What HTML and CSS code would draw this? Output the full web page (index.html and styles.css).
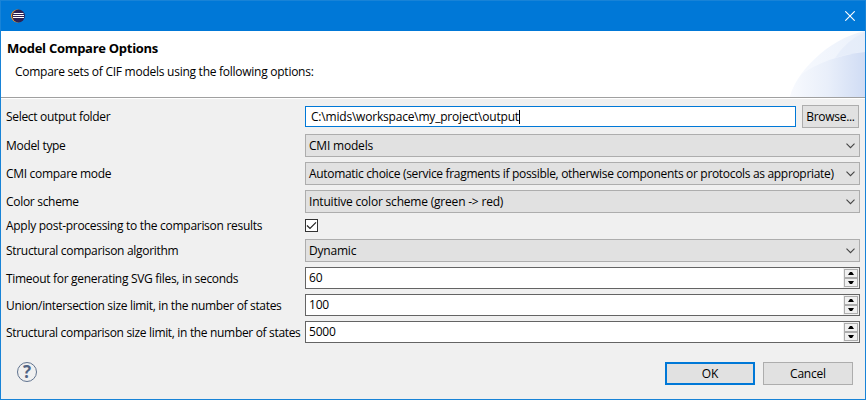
FILE: index.html
```
<!DOCTYPE html>
<html lang="en">
<head>
<meta charset="utf-8">
<title>Model Compare Options</title>
<link rel="stylesheet" href="styles.css">
</head>
<body>
<main class="dialog">
  <div class="titlebar">
    <svg class="logo" width="14" height="14" viewBox="0 0 14 14"><circle cx="6.5" cy="7" r="6.5" fill="#f7941e"/><circle cx="7.5" cy="7" r="6.4" fill="#2c2255"/><path d="M2.5 4.5h10M2 6.5h11M2 8.5h11" stroke="#fff" stroke-width="1"/></svg>
    <svg class="close" width="10" height="10" viewBox="0 0 10 10"><path d="M0.3 0.3L9.7 9.7M9.7 0.3L0.3 9.7" stroke="#fff" stroke-width="1.1"/></svg>
  </div>
  <header class="banner">
    <div class="heading">
      <h1><span>Model Compare Options</span></h1>
      <p><span>Compare sets of CIF models using the following options:</span></p>
    </div>
    <svg class="swoosh" width="75" height="66" viewBox="0 0 75 66">
      <defs>
        <linearGradient id="a"><stop offset="0" stop-color="#f8fafe"/><stop offset="1" stop-color="#ebf1fb"/></linearGradient>
        <linearGradient id="b"><stop offset="0" stop-color="#f8fafe"/><stop offset=".5" stop-color="#e9effa"/><stop offset="1" stop-color="#d0dcf4"/></linearGradient>
      </defs>
      <path d="M0 66C5 43 37 8 75 0V66Z" fill="url(#a)"/>
      <path d="M45 27Q57 9 75 1V21Q59 22 45 27Z" fill="#e1e9f8" opacity=".6"/>
      <path d="M0 66Q3 54 12 43C28 32 48 24 75 21V66Z" fill="url(#b)"/>
    </svg>
  </header>
  <form class="options">
    <label>Select output folder</label>
    <div class="folder"><div class="input"><span>C:\mids\workspace\my_project\output</span><i class="caret"></i></div><button type="button" class="button browse"><span>Browse...</span></button></div>
    <label>Model type</label>
    <div class="combo"><span>CMI models</span><svg class="chev" width="9" height="6" viewBox="0 0 9 6"><path d="M.5.7l4 4 4-4"/></svg></div>
    <label>CMI compare mode</label>
    <div class="combo"><span class="auto">Automatic choice (service fragments if possible, otherwise components or protocols as appropriate)</span><svg class="chev" width="9" height="6" viewBox="0 0 9 6"><path d="M.5.7l4 4 4-4"/></svg></div>
    <label>Color scheme</label>
    <div class="combo"><span>Intuitive color scheme (green -&gt; red)</span><svg class="chev" width="9" height="6" viewBox="0 0 9 6"><path d="M.5.7l4 4 4-4"/></svg></div>
    <label class="short">Apply post-processing to the comparison results</label>
    <div class="check"><svg width="11" height="11" viewBox="0 0 11 11"><path d="M1 5.5l3 3L10 2.3" fill="none" stroke="#222" stroke-width="1.2"/></svg></div>
    <label>Structural comparison algorithm</label>
    <div class="combo"><span>Dynamic</span><svg class="chev" width="9" height="6" viewBox="0 0 9 6"><path d="M.5.7l4 4 4-4"/></svg></div>
    <label>Timeout for generating SVG files, in seconds</label>
    <div class="spinner"><span>60</span><div class="arrows"><i class="up"></i><i class="down"></i></div></div>
    <label class="long">Union/intersection size limit, in the number of states</label>
    <div class="spinner"><span>100</span><div class="arrows"><i class="up"></i><i class="down"></i></div></div>
    <label class="long">Structural comparison size limit, in the number of states</label>
    <div class="spinner"><span>5000</span><div class="arrows"><i class="up"></i><i class="down"></i></div></div>
  </form>
  <footer class="actions">
    <div class="help">?</div>
    <button type="button" class="button ok"><span>OK</span></button>
    <button type="button" class="button"><span>Cancel</span></button>
  </footer>
</main>
</body>
</html>
```
FILE: styles.css
```
* { box-sizing: border-box; }
body { margin: 0; font: 12px/16px "Open Sans", "Noto Sans", sans-serif; color: #000; letter-spacing: -0.2px; }
.dialog { width: 866px; height: 400px; border: 1px solid #1883d7; background: #f0f0f0; overflow: hidden; white-space: nowrap; }
.titlebar { height: 30px; background: #0078d7; display: flex; align-items: center; justify-content: space-between; padding: 0 10px; }
.banner { height: 66px; background: #fff; display: flex; justify-content: space-between; }
.heading { padding: 9px 0 0 6px; }
h1 { font-size: 13px; line-height: 17px; margin: 0; font-weight: 700; letter-spacing: -0.28px; }
p { margin: 7px 0 0 8px; letter-spacing: -0.26px; }
.options { margin: 0; border-top: 1px solid #a0a0a0; box-shadow: inset 0 1px #fff; padding: 7px 5px 0; display: grid; grid-template-columns: 299px 555px; grid-template-rows: 24px 23px 23px 24px 15px 23px 22px 22px 22px; row-gap: 5px; align-items: start; }
label { line-height: 23px; letter-spacing: -0.305px; }
label.short { line-height: 13px; letter-spacing: -0.285px; }
label.long { letter-spacing: -0.33px; }
.auto { letter-spacing: -0.32px; }
.folder { display: flex; align-items: center; height: 23px; }
.input { width: 491px; height: 21px; background: #fff; border: 1px solid #0078d7; padding-left: 5px; display: flex; align-items: center; }
.caret { width: 1px; height: 14px; background: #000; }
.button { font: inherit; letter-spacing: inherit; color: #000; width: 90px; height: 23px; padding: 0; border: 1px solid #adadad; border-radius: 0; background: #e1e1e1; line-height: 20px; }
.browse { width: 57px; margin-left: 6px; letter-spacing: -0.3px; }
.combo { height: 23px; border: 1px solid #adadad; background: #e1e1e1; padding: 0 4px 0 3px; display: flex; align-items: center; justify-content: space-between; }
.chev path { fill: none; stroke: #444; stroke-width: 1.1; }
.check { width: 13px; height: 13px; border: 1px solid #333; background: #fff; display: flex; }
.spinner { height: 22px; border: 1px solid #646464; background: #fff; padding: 0 0 0 3px; display: flex; align-items: center; justify-content: space-between; }
.arrows { width: 16px; height: 20px; background: #f0f0f0; padding: 1px; display: flex; flex-direction: column; }
.arrows i { width: 14px; height: 9px; border: 1px solid #adadad; display: flex; align-items: center; justify-content: center; }
.arrows i::before { content: ""; width: 6px; height: 3px; background: #000; clip-path: polygon(2px 0, 4px 0, 6px 3px, 0 3px); }
.arrows .down::before { clip-path: polygon(0 0, 6px 0, 4px 3px, 2px 3px); }
.actions { display: flex; gap: 8px; padding: 19px 12px 0 16px; align-items: flex-start; }
.help { width: 20px; height: 20px; margin-right: auto; border: 1px solid #60738f; border-radius: 50%; color: #506484; font: 700 17px/18px "Open Sans", sans-serif; text-align: center; }
.ok { border: 2px solid #0078d7; line-height: 18px; }
```
